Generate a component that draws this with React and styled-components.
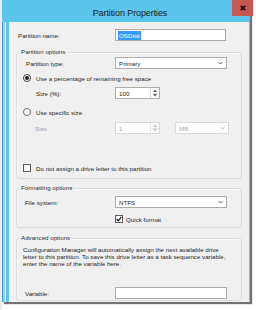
import React from 'react';
import styled, { createGlobalStyle } from 'styled-components';

const GlobalStyle = createGlobalStyle`
  body {
    margin: 0;
    background: #fff;
  }
`;

// whole shot, with the left sliver of whatever sits behind the dialog
const Screen = styled.div`
  width: 256px;
  height: 310px;
  overflow: hidden;
  box-sizing: border-box;
  padding-left: 2px;
  background: linear-gradient(to right, #ececec 0 2px, #fff 2px);
  font-family: "Liberation Sans", Arial, sans-serif;
  color: #1e1e1e;
`;

const Window = styled.div`
  width: 248px;
  height: 302px;
  display: flex;
  flex-direction: column;
  background: linear-gradient(
    to right,
    #3c9fd4 0 1px,
    #93d5ef 1px 3px,
    #e6f6fc 3px 4px,
    #5ec3e9 4px 7px,
    #f2fafd 7px 8px,
    #5ec3e9 8px
  );
  box-shadow: 2px 2px 1px rgba(0, 0, 0, 0.55);
`;

const TitleBar = styled.div`
  position: relative;
  height: 22px;
  flex: none;
  display: flex;
  align-items: center;
  justify-content: center;
  box-sizing: border-box;
  padding: 3px 0 0 8px;
  background: #5bc5ec;
`;

const Title = styled.span`
  font-size: 9px;
  color: #1b1b1b;
  letter-spacing: -0.1px;
`;

const CloseButton = styled.div`
  position: absolute;
  top: 0;
  right: -3px;
  width: 21px;
  height: 16px;
  display: flex;
  align-items: center;
  justify-content: center;
  background: #c75750;
`;

const Body = styled.div`
  flex: 1;
  margin: 0 1px 0 8px;
  background: #f0f0f0;
  box-sizing: border-box;
  padding: 7px 7px 0 6px;
  display: flex;
  flex-direction: column;
`;

const Group = styled.fieldset`
  margin: ${(p) => p.$top}px 0 0 0;
  padding: 0 0 ${(p) => p.$bottom}px 6px;
  min-width: 0;
  border: 1px solid #dcdcdc;
  border-radius: 3px;
  box-shadow: inset 1px 1px 0 #fafafa;
`;

const Legend = styled.legend`
  margin-left: -3px;
  padding: 0 1px;
  font-size: 6.2px;
  line-height: 8px;
  color: #2a2a2a;
`;

const Row = styled.div`
  display: flex;
  align-items: center;
  height: ${(p) => p.$h}px;
  margin-top: ${(p) => p.$mt || 0}px;
  padding-left: ${(p) => p.$indent || 0}px;
`;

const Label = styled.span`
  flex: none;
  width: ${(p) => p.$w}px;
  box-sizing: border-box;
  padding-left: ${(p) => p.$indent || 0}px;
  font-size: 6.2px;
  white-space: nowrap;
  color: ${(p) => (p.$disabled ? '#a3a3a3' : '#1e1e1e')};
`;

const Text = styled.span`
  margin-left: ${(p) => p.$gap}px;
  font-size: 6.2px;
  white-space: nowrap;
  color: #1e1e1e;
`;

const Field = styled.div`
  flex: none;
  width: ${(p) => p.$w}px;
  height: 12px;
  margin-left: ${(p) => p.$ml || 0}px;
  box-sizing: border-box;
  display: flex;
  align-items: center;
  padding-left: 2px;
  background: #fff;
  border: 1px solid ${(p) => (p.$disabled ? '#d9d9d9' : '#acacac')};
  font-size: 6.2px;
  color: ${(p) => (p.$disabled ? '#a8a8a8' : '#1e1e1e')};
`;

const Selected = styled.span`
  background: #3399ff;
  color: #fff;
  padding: 1px 1px;
`;

const FieldValue = styled.span`
  flex: 1;
  padding-left: 1px;
`;

const Chevron = styled.svg`
  flex: none;
  margin-right: 3px;
`;

const SpinButtons = styled.div`
  flex: none;
  width: 8px;
  height: 100%;
  display: flex;
  flex-direction: column;
  border-left: 1px solid ${(p) => (p.$disabled ? '#e6e6e6' : '#d6d6d6')};
`;

const SpinHalf = styled.div`
  flex: 1;
  display: flex;
  align-items: center;
  justify-content: center;
  & + & {
    border-top: 1px solid ${(p) => (p.$disabled ? '#e6e6e6' : '#d6d6d6')};
  }
`;

const Radio = styled.span`
  flex: none;
  width: 8px;
  height: 8px;
  box-sizing: border-box;
  border-radius: 50%;
  border: 1px solid ${(p) => (p.$checked ? '#3c3c3c' : '#6d6d6d')};
  background: #fff;
  display: flex;
  align-items: center;
  justify-content: center;
  &::after {
    content: '';
    width: 4px;
    height: 4px;
    border-radius: 50%;
    background: ${(p) => (p.$checked ? '#1e1e1e' : 'transparent')};
  }
`;

const Box = styled.span`
  flex: none;
  width: 8px;
  height: 8px;
  margin-left: ${(p) => p.$ml || 0}px;
  box-sizing: border-box;
  border: 1px solid #5d5d5d;
  background: #fff;
  display: flex;
  align-items: center;
  justify-content: center;
`;

const Paragraph = styled.p`
  margin: 4px 0 0;
  font-size: 6.2px;
  line-height: 7px;
  color: #1e1e1e;
`;

const ChevronIcon = ({ disabled }) => (
  <Chevron width="5" height="4" viewBox="0 0 5 4">
    <polyline points="0.5,1 2.5,3 4.5,1" fill="none" stroke={disabled ? '#b5b5b5' : '#555'} strokeWidth="0.9" />
  </Chevron>
);

const Arrow = ({ up, disabled }) => (
  <svg width="4" height="3" viewBox="0 0 4 3">
    <polygon points={up ? '0,3 2,0.5 4,3' : '0,0 2,2.5 4,0'} fill={disabled ? '#c0c0c0' : '#555'} />
  </svg>
);

const Spin = ({ value, disabled }) => (
  <Field $w={45} $disabled={disabled} style={{ paddingRight: 0 }}>
    <FieldValue>{value}</FieldValue>
    <SpinButtons $disabled={disabled}>
      <SpinHalf $disabled={disabled}><Arrow up disabled={disabled} /></SpinHalf>
      <SpinHalf $disabled={disabled}><Arrow disabled={disabled} /></SpinHalf>
    </SpinButtons>
  </Field>
);

const Select = ({ value, w = 112, ml, disabled }) => (
  <Field $w={w} $ml={ml} $disabled={disabled}>
    <FieldValue>{value}</FieldValue>
    <ChevronIcon disabled={disabled} />
  </Field>
);

export default function App() {
  return (
    <Screen>
      <GlobalStyle />
      <Window>
        <TitleBar>
          <Title>Partition Properties</Title>
          <CloseButton>
            <svg width="6" height="6" viewBox="0 0 6 6">
              <path d="M0.8 0.8 L5.2 5.2 M5.2 0.8 L0.8 5.2" stroke="#1e1010" strokeWidth="1.8" />
            </svg>
          </CloseButton>
        </TitleBar>

        <Body>
          <Row $h={12} $indent={2}>
            <Label $w={97}>Partition name:</Label>
            <Field $w={111}>
              <Selected>OSDisk</Selected>
            </Field>
          </Row>

          <Group $top={7} $bottom={5}>
            <Legend>Partition options</Legend>
            <Row $h={12} $mt={1}>
              <Label $w={92} $indent={3}>Partition type:</Label>
              <Select value="Primary" />
            </Row>
            <Row $h={10} $mt={4}>
              <Radio $checked />
              <Text $gap={5}>Use a percentage of remaining free space</Text>
            </Row>
            <Row $h={12} $mt={4}>
              <Label $w={92} $indent={13}>Size (%):</Label>
              <Spin value="100" />
            </Row>
            <Row $h={10} $mt={8}>
              <Radio />
              <Text $gap={5}>Use specific size</Text>
            </Row>
            <Row $h={12} $mt={5}>
              <Label $w={92} $indent={12} $disabled>Size:</Label>
              <Spin value="1" disabled />
              <Select value="MB" w={54} ml={15} disabled />
            </Row>
            <Row $h={10} $mt={29}>
              <Box />
              <Text $gap={5}>Do not assign a drive letter to this partition</Text>
            </Row>
          </Group>

          <Group $top={5} $bottom={3}>
            <Legend>Formatting options</Legend>
            <Row $h={12} $mt={4}>
              <Label $w={92} $indent={2}>File system:</Label>
              <Select value="NTFS" />
            </Row>
            <Row $h={10} $mt={6}>
              <Box $ml={92}>
                <svg width="6" height="6" viewBox="0 0 6 6">
                  <polyline points="0.6,3 2.3,4.8 5.4,0.9" fill="none" stroke="#1e1e1e" strokeWidth="1.3" />
                </svg>
              </Box>
              <Text $gap={3}>Quick format</Text>
            </Row>
          </Group>

          <Group $top={6} $bottom={1}>
            <Legend>Advanced options</Legend>
            <Paragraph>
              Configuration Manager will automatically assign the next available drive
              <br />
              letter to this partition. To save this drive letter as a task sequence variable,
              <br />
              enter the name of the variable here.
            </Paragraph>
            <Row $h={12} $mt={20}>
              <Label $w={92} $indent={2}>Variable:</Label>
              <Field $w={112} />
            </Row>
          </Group>
        </Body>
      </Window>
    </Screen>
  );
}
